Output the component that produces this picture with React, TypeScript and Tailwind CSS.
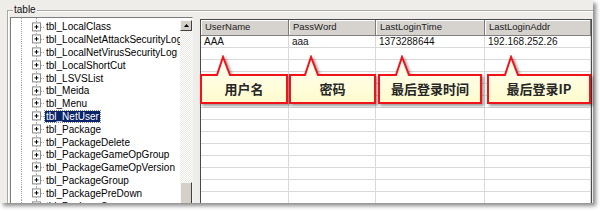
import React from 'react';

const treeItems = [
  'tbl_LocalClass',
  'tbl_LocalNetAttackSecurityLog',
  'tbl_LocalNetVirusSecurityLog',
  'tbl_LocalShortCut',
  'tbl_LSVSList',
  'tbl_Meida',
  'tbl_Menu',
  'tbl_NetUser',
  'tbl_Package',
  'tbl_PackageDelete',
  'tbl_PackageGameOpGroup',
  'tbl_PackageGameOpVersion',
  'tbl_PackageGroup',
  'tbl_PackagePreDown',
  'tbl_PackageServer',
];

const columns = [
  { name: 'UserName', w: 'w-[88px]' },
  { name: 'PassWord', w: 'w-[87px]' },
  { name: 'LastLoginTime', w: 'w-[109px]' },
  { name: 'LastLoginAddr', w: 'w-[106px]' },
];

const rows = [['AAA', 'aaa', '1373288644', '192.168.252.26'], ...Array.from({ length: 14 }, () => ['', '', '', ''])];

// callouts: left edge, width, pointer tip x (page coords)
const callouts = [
  { text: '用户名', left: 200, w: 88, tip: 223 },
  { text: '密码', left: 289, w: 87, tip: 311 },
  { text: '最后登录时间', left: 378, w: 104, tip: 402 },
  { text: '最后登录IP', left: 487, w: 104, tip: 511 },
];

function TreeLines({ h, box }: { h: number; box: boolean }) {
  const c = h / 2;
  return (
    <svg width="34" height={h} viewBox={`0 0 34 ${h}`} className="shrink-0 block">
      <line x1="10.5" y1="0" x2="10.5" y2={h} stroke="#a0a0a0" strokeDasharray="1 1" />
      <line x1="25.5" y1="0" x2="25.5" y2={h} stroke="#a0a0a0" strokeDasharray="1 1" />
      {box && (
        <>
          <line x1="30" y1={c} x2="34" y2={c} stroke="#a0a0a0" strokeDasharray="1 1" />
          <rect x="21.5" y={c - 4.5} width="8" height="8" fill="#fff" stroke="#8a8a8a" />
          <line x1="23.5" y1={c - 0.5} x2="27.5" y2={c - 0.5} stroke="#000" />
          <line x1="25.5" y1={c - 2.5} x2="25.5" y2={c + 1.5} stroke="#000" />
        </>
      )}
    </svg>
  );
}

function Callout({ text, left, w, tip }: { text: string; left: number; w: number; tip: number }) {
  const t = tip - left;
  const id = `cg${left}`;
  return (
    <div className="absolute top-[55px]" style={{ left, width: w + 4 }}>
      <svg width={w + 4} height="52" className="block drop-shadow-[2px_2px_1.5px_rgba(0,0,0,0.4)]">
        <defs>
          <linearGradient id={id} x1="0" y1="0" x2="0" y2="1">
            <stop offset="0" stopColor="#fffff6" />
            <stop offset="1" stopColor="#fffbcc" />
          </linearGradient>
        </defs>
        <path
          d={`M1,20 L${t - 6},20 L${t},2 L${t + 7},20 L${w - 1},20 L${w - 1},48 L1,48 Z`}
          fill={`url(#${id})`}
          stroke="#f21219"
          strokeWidth="2"
          strokeLinejoin="miter"
        />
      </svg>
      <div
        className="absolute left-0 top-[20px] h-[28px] flex items-center justify-center text-[13px] font-semibold text-[#262626] font-['Noto_Sans_CJK_SC',sans-serif]"
        style={{ width: w }}
      >
        {text}
      </div>
    </div>
  );
}

export default function App() {
  return (
    <div className="relative w-[600px] h-[211px] bg-white overflow-hidden font-['Liberation_Sans',Arial,sans-serif] text-[9.5px] text-black">
      <div className="w-[593px] h-[203px] bg-[#eeede9] shadow-[3px_3px_4px_rgba(0,0,0,0.45)] overflow-hidden pt-[10px] pl-[7px]">
        <div className="relative h-[210px] border-l border-t border-[#a9a79f] shadow-[inset_1px_1px_0_#fff]">
          <span className="absolute left-[5px] -top-[7px] px-[1px] bg-[#eeede9] leading-[12px] text-[10px] text-[#111]">table</span>
          <div className="flex items-start pt-[6px] pl-[2px]">
            {/* tree */}
            <div className="w-[183px] h-[192px] flex bg-white border-l border-t border-r border-[#7c7c7c] border-r-[#f4f4f4] overflow-hidden">
              <div className="w-[169px] overflow-hidden text-[10px]">
                <TreeLines h={2.6} box={false} />
                {treeItems.map((name) => (
                  <div key={name} className="flex items-center h-[12.8px]">
                    <TreeLines h={12.8} box />
                    <span
                      className={
                        name === 'tbl_NetUser'
                          ? 'px-[1px] leading-[11px] whitespace-nowrap bg-[#0a246a] text-white outline-1 outline-dotted outline-[#808080]'
                          : 'px-[1px] leading-[11px] whitespace-nowrap'
                      }
                    >
                      {name}
                    </span>
                  </div>
                ))}
              </div>
              <div className="w-[12px] flex flex-col pt-[2px]">
                <div className="h-[11px] bg-[#d4d0c8] border-t border-l border-[#f8f8f8] border-r border-b border-r-[#404040] border-b-[#404040] flex items-center justify-center">
                  <svg width="5" height="3" className="block">
                    <path d="M2.5,0 L5,3 L0,3 Z" fill="#000" />
                  </svg>
                </div>
                <div className="flex-1 bg-[repeating-conic-gradient(#ffffff_0_25%,#eae8e3_0_50%)] bg-[length:2px_2px]" />
                <div className="h-[27px] bg-[#d4d0c8] border-t border-l border-[#f8f8f8] border-r border-r-[#404040]" />
              </div>
            </div>

            {/* grid */}
            <div className="ml-[7px] mt-[2px] w-[392px] h-[190px] bg-white border-l border-t border-r border-[#4a4a4a] overflow-hidden">
              <div className="flex h-[16px] bg-[#d6d3ce] border-b border-[#808080]">
                {columns.map((c) => (
                  <div
                    key={c.name}
                    className={`${c.w} shrink-0 flex items-center pl-[4px] border-r border-[#7a7a7a] shadow-[inset_1px_1px_0_#fff] text-[#222] whitespace-nowrap`}
                  >
                    {c.name}
                  </div>
                ))}
              </div>
              {rows.map((r, i) => (
                <div key={i} className="flex h-[12px] border-b border-[#d9d9d9]">
                  {r.map((v, j) => (
                    <div
                      key={j}
                      className={`${columns[j].w} shrink-0 flex items-center pl-[3px] border-r border-[#d9d9d9] text-[10px] text-[#111] whitespace-nowrap leading-[11px]`}
                    >
                      {v}
                    </div>
                  ))}
                </div>
              ))}
            </div>
          </div>
        </div>
      </div>

      {callouts.map((c) => (
        <Callout key={c.text} {...c} />
      ))}
    </div>
  );
}
